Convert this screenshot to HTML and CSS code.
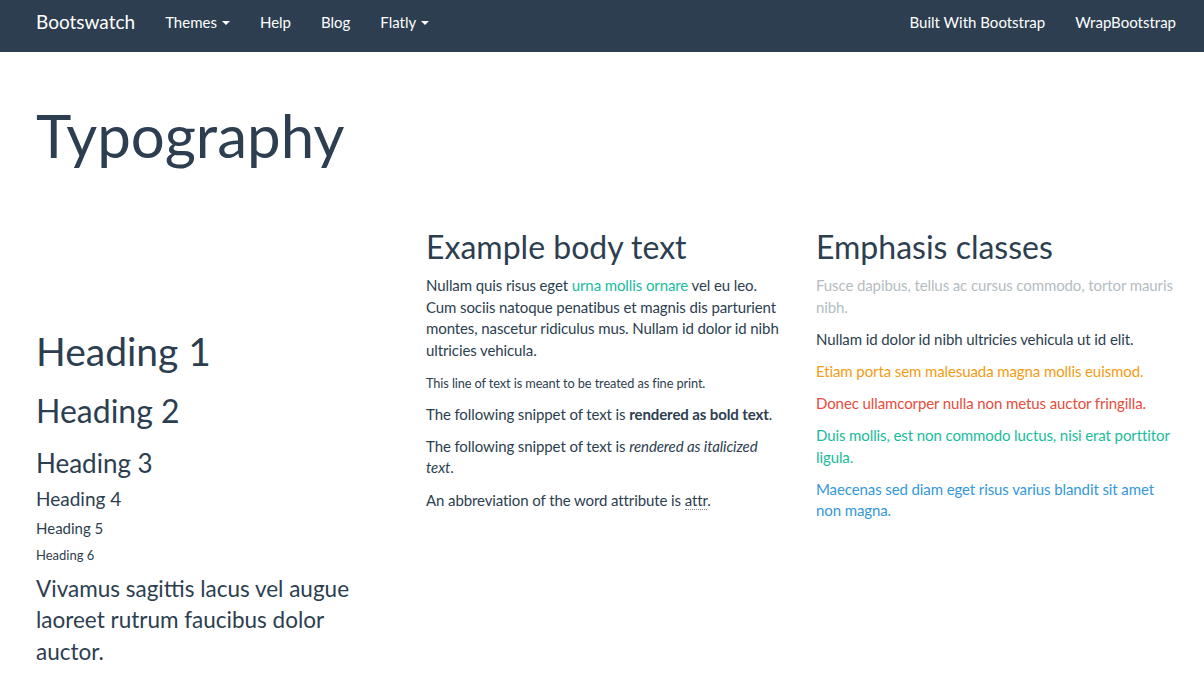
FILE: index.html
```html
<!DOCTYPE html>
<html>
<head>
<meta charset="utf-8">
<title>Bootswatch: Flatly</title>
<link rel="stylesheet" href="styles.css">
</head>
<body>
<nav class="navbar">
  <div class="container navbar-inner">
    <a class="brand" href="#">Bootswatch</a>
    <ul class="nav">
      <li><a href="#">Themes <span class="caret"></span></a></li>
      <li><a href="#">Help</a></li>
      <li><a href="#">Blog</a></li>
      <li><a href="#">Flatly <span class="caret"></span></a></li>
    </ul>
    <ul class="nav nav-right">
      <li><a href="#">Built With Bootstrap</a></li>
      <li><a href="#">WrapBootstrap</a></li>
    </ul>
  </div>
</nav>

<main class="container">
  <div class="page-header">
    <h1 class="page-title">Typography</h1>
  </div>

  <div class="row">
    <div class="col col-headings">
      <h1>Heading 1</h1>
      <h2>Heading 2</h2>
      <h3>Heading 3</h3>
      <h4>Heading 4</h4>
      <h5>Heading 5</h5>
      <h6>Heading 6</h6>
      <p class="lead">Vivamus sagittis lacus vel augue laoreet rutrum faucibus dolor auctor.</p>
    </div>
    <div class="col">
      <h2>Example body text</h2>
      <p>Nullam quis risus eget <a href="#">urna mollis ornare</a> vel eu leo. Cum sociis natoque penatibus et magnis dis parturient montes, nascetur ridiculus mus. Nullam id dolor id nibh ultricies vehicula.</p>
      <p><small>This line of text is meant to be treated as fine print.</small></p>
      <p>The following snippet of text is <strong>rendered as bold text</strong>.</p>
      <p>The following snippet of text is <em>rendered as italicized text</em>.</p>
      <p>An abbreviation of the word attribute is <abbr title="attribute">attr</abbr>.</p>
    </div>
    <div class="col">
      <h2>Emphasis classes</h2>
      <p class="text-muted">Fusce dapibus, tellus ac cursus commodo, tortor mauris nibh.</p>
      <p class="text-primary">Nullam id dolor id nibh ultricies vehicula ut id elit.</p>
      <p class="text-warning">Etiam porta sem malesuada magna mollis euismod.</p>
      <p class="text-danger">Donec ullamcorper nulla non metus auctor fringilla.</p>
      <p class="text-success">Duis mollis, est non commodo luctus, nisi erat porttitor ligula.</p>
      <p class="text-info">Maecenas sed diam eget risus varius blandit sit amet non magna.</p>
    </div>
  </div>
</main>
</body>
</html>
```

FILE: styles.css
```css
* { box-sizing: border-box; }

html, body {
  margin: 0;
  background: #ffffff;
}

body {
  font-family: Lato, "Open Sans", "Liberation Sans", sans-serif;
  font-size: 15px;
  line-height: 1.428571;
  color: #2c3e50;
}

a { color: #18bc9c; text-decoration: none; }

.container {
  width: 1170px;
  margin-left: 21px;
  padding: 0 15px;
}

/* Navbar */
.navbar {
  background: #2c3e50;
  height: 52px;
}

.navbar-inner {
  display: flex;
  align-items: stretch;
  height: 52px;
}

.brand {
  display: flex;
  align-items: center;
  margin-left: -15px;
  padding: 0 15px 9px;
  font-size: 19px;
  color: #ffffff;
}

.nav {
  display: flex;
  list-style: none;
  margin: 0;
  padding: 0;
}

.nav li { display: flex; }

.nav a {
  display: flex;
  align-items: center;
  gap: 5px;
  padding: 0 15px 7px;
  color: #ffffff;
  font-size: 15px;
}

.nav-right {
  margin-left: auto;
  margin-right: -15px;
}

.caret {
  display: inline-block;
  width: 0;
  height: 0;
  border-top: 4px solid #ffffff;
  border-left: 4px solid transparent;
  border-right: 4px solid transparent;
  margin-top: 1px;
}

/* Page header */
.page-header {
  padding-top: 50px;
  padding-bottom: 0;
}

.page-title {
  margin: 0;
  font-size: 60px;
  font-weight: 400;
  line-height: 1.1;
}

/* Grid */
.row {
  display: grid;
  grid-template-columns: repeat(3, 390px);
  margin: 40px -15px 0;
}

.col { padding: 0 15px; }

.col-headings { padding-top: 101px; }

h1, h2, h3, h4, h5, h6 {
  font-family: inherit;
  font-weight: 400;
  line-height: 1.1;
  color: #2c3e50;
}

h1, h2, h3 { margin: 21.43px 0 10.71px; }
h4, h5, h6 { margin: 10.71px 0 10.71px; }

.col-headings h2 { margin-top: 19.5px; }

h1 { font-size: 39px; }
h2 { font-size: 32px; }
h3 { font-size: 26px; }
h4 { font-size: 19px; }
h5 { font-size: 15px; }
h6 { font-size: 13px; }

p {
  margin: 0 0 10.71px;
  letter-spacing: -0.1px;
}

small { font-size: 85%; }

strong { font-weight: 700; }

abbr[title] {
  text-decoration: none;
  border-bottom: 1px dotted #7b8a8b;
  cursor: help;
}

.lead {
  font-size: 22.5px;
  line-height: 1.4;
  margin-bottom: 21px;
  letter-spacing: 0;
}

.text-muted { color: #b4bcc2; }
.text-primary { color: #2c3e50; }
.text-warning { color: #f39c12; }
.text-danger { color: #e74c3c; }
.text-success { color: #18bc9c; }
.text-info { color: #3498db; }
```
